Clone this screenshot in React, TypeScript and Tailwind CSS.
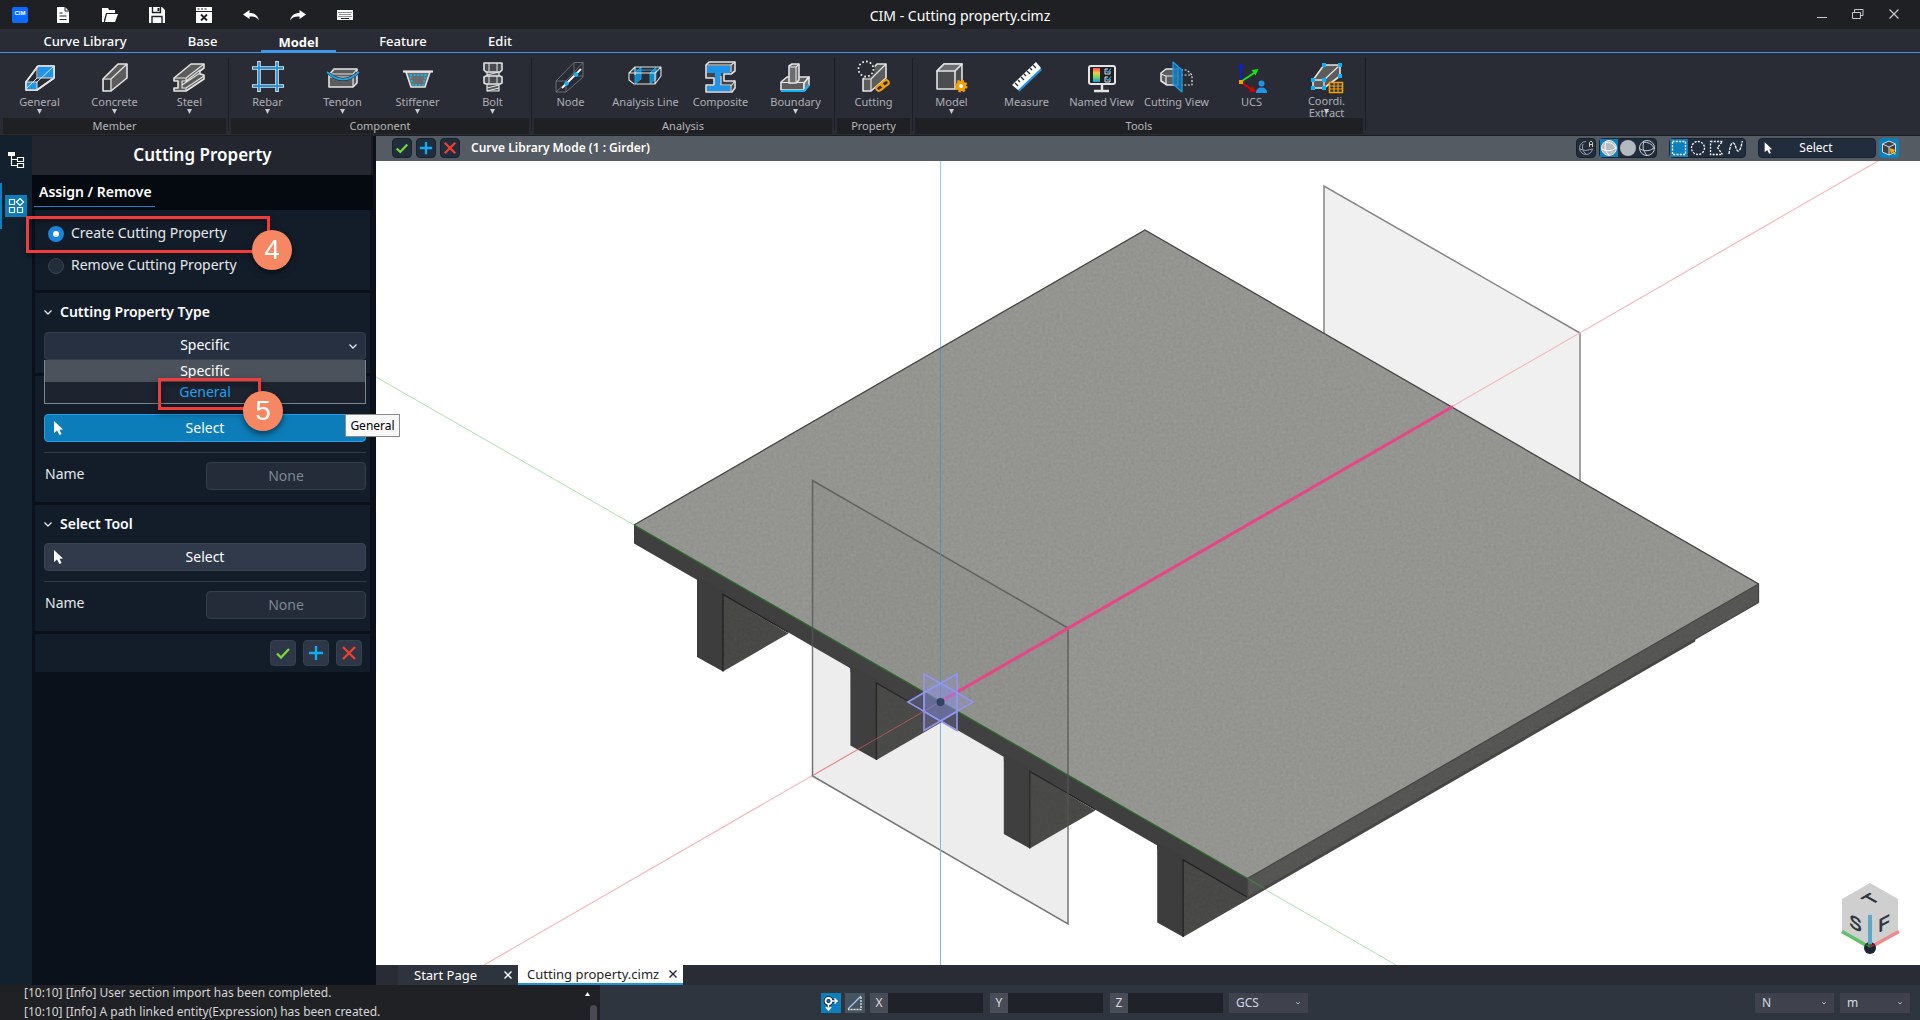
import { useState } from "react";
import type { ReactNode } from "react";

const EDGE = "#e4e4e4";
const BODY = "#5c5c5c";

type RibbonItem = { label: string; icon: ReactNode; menu?: boolean };
type RibbonGroup = { title: string; items: RibbonItem[] };

const ribbonGroups: RibbonGroup[] = [
  {
    title: "Member",
    items: [
      { label: "General", icon: <GeneralIcon />, menu: true },
      { label: "Concrete", icon: <ConcreteIcon />, menu: true },
      { label: "Steel", icon: <SteelIcon />, menu: true }
    ]
  },
  {
    title: "Component",
    items: [
      { label: "Rebar", icon: <RebarIcon />, menu: true },
      { label: "Tendon", icon: <TendonIcon />, menu: true },
      { label: "Stiffener", icon: <StiffenerIcon />, menu: true },
      { label: "Bolt", icon: <BoltIcon />, menu: true }
    ]
  },
  {
    title: "Analysis",
    items: [
      { label: "Node", icon: <NodeIcon /> },
      { label: "Analysis Line", icon: <AnalysisLineIcon /> },
      { label: "Composite", icon: <CompositeIcon /> },
      { label: "Boundary", icon: <BoundaryIcon />, menu: true }
    ]
  },
  {
    title: "Property",
    items: [{ label: "Cutting", icon: <CuttingIcon /> }]
  },
  {
    title: "Tools",
    items: [
      { label: "Model", icon: <ModelIcon />, menu: true },
      { label: "Measure", icon: <MeasureIcon /> },
      { label: "Named View", icon: <NamedViewIcon /> },
      { label: "Cutting View", icon: <CuttingViewIcon /> },
      { label: "UCS", icon: <UcsIcon /> },
      { label: "Coordi. Extract", icon: <CoordiIcon />, menu: true }
    ]
  }
];

const logLines = [
  "[10:10] [Info] User section import has been completed.",
  "[10:10] [Info] A path linked entity(Expression) has been created."
];

export default function App() {
  return (
    <div className="flex h-screen w-full flex-col overflow-hidden bg-[#0c131e] font-['Noto_Sans',sans-serif] text-[13px] text-white">
      <TitleBar />
      <MenuTabs />
      <Ribbon />
      <div className="flex min-h-0 flex-1">
        <SideRail />
        <PropertyPanel />
        <main className="flex min-w-0 flex-1 flex-col">
          <ViewHeader />
          <Viewport />
          <DocumentTabs />
        </main>
      </div>
      <StatusBar />
    </div>
  );
}

function TitleBar() {
  return (
    <header className="relative flex h-[29px] shrink-0 items-center bg-[#1f2024] pl-3">
      <svg className="mr-[27px] size-4" viewBox="0 0 16 16">
        <rect width="16" height="16" rx="2" fill="#0a6cff" />
        <text x="8" y="8" textAnchor="middle" fontSize="6" fontWeight="700" fill="#fff" fontFamily="Liberation Sans, sans-serif">
          CIM
        </text>
      </svg>
      <div className="flex items-center gap-[31px]">
        <QuickButton label="New">
          <path d="M2 0h8l4 4v12H2z" fill="#fff" />
          <path d="M10 0v4h4M4.500 6h3M4.500 9h7M4.500 12.500h7" stroke="#1f2024" fill="none" />
        </QuickButton>
        <QuickButton label="Open">
          <path d="M0 1h6l1 2h6v3H4L2 13v2H0z" fill="#fff" />
          <path d="M5 7h11l-3 8H3z" fill="#fff" />
        </QuickButton>
        <QuickButton label="Save">
          <path d="M0 0h13l3 3v13H0z" fill="#fff" />
          <path d="M3.500 0v5.500h8V0M3 16V9.500h10V16" stroke="#1f2024" strokeWidth="1.400" fill="none" />
          <path d="M8.500 1h2v3h-2z" fill="#1f2024" />
        </QuickButton>
        <QuickButton label="Close file">
          <path d="M0 0h16v4H0zM0 5h16v11H0z" fill="#fff" />
          <path d="M5 7.500l6 6M11 7.500l-6 6" stroke="#1f2024" strokeWidth="1.800" />
          <path d="M1.500 2h2M5 2h2M8.500 2h2" stroke="#1f2024" />
        </QuickButton>
        <QuickButton label="Undo">
          <path d="M0 7.500L6.500 3v3c5 0 8 2 9.500 7.500C13.500 10 11 9.300 6.500 9.500V12z" fill="#fff" />
        </QuickButton>
        <QuickButton label="Redo">
          <path d="M16 7.500L9.500 3v3C4.500 6 1.500 8 0 13.500 2.500 10 5 9.300 9.500 9.500V12z" fill="#fff" />
        </QuickButton>
        <QuickButton label="Keyboard">
          <path d="M0 3h16v10H0z" fill="#fff" />
          <path d="M1.500 5.500h13M2.500 7.500h12M1.500 9.500h13" stroke="#1f2024" strokeDasharray="1 1" />
          <path d="M4 11.500h8" stroke="#1f2024" />
        </QuickButton>
      </div>
      <h1 className="pointer-events-none absolute inset-x-0 top-[6px] text-center text-sm font-normal">CIM - Cutting property.cimz</h1>
      <div className="ml-auto flex items-center gap-5 pr-[18px] text-[#c8c9cc]">
        <button aria-label="Minimize" className="size-4">
          <svg viewBox="0 0 16 16"><path d="M3 10.500h10" stroke="currentColor" /></svg>
        </button>
        <button aria-label="Restore" className="size-4">
          <svg viewBox="0 0 16 16" fill="none" stroke="currentColor">
            <path d="M2.500 5.500h8v6h-8zM4.500 5V2.500h8.500v6H11" />
          </svg>
        </button>
        <button aria-label="Close" className="size-4">
          <svg viewBox="0 0 16 16"><path d="M3.500 2.500l9 9M12.500 2.500l-9 9" stroke="currentColor" strokeWidth="1.200" /></svg>
        </button>
      </div>
    </header>
  );
}

function QuickButton({ label, children }: { label: string; children: ReactNode }) {
  return (
    <button aria-label={label} className="size-4">
      <svg viewBox="0 0 16 16">{children}</svg>
    </button>
  );
}

function MenuTabs() {
  return (
    <nav className="flex h-6 shrink-0 border-b border-[#3d97ee] bg-[#292c35] pl-[26px] text-[13px] font-medium">
      <button className="w-[118px] pt-[2px]">Curve Library</button>
      <button className="w-[117px] pt-[2px]">Base</button>
      <button className="w-[75px] border-b-2 border-[#3d97ee] pt-1 font-bold">Model</button>
      <button className="w-[134px] pt-[2px]">Feature</button>
      <button className="w-[60px] pt-[2px]">Edit</button>
    </nav>
  );
}

function Ribbon() {
  return (
    <section className="flex h-[83px] shrink-0 border-b border-[#1b1d23] bg-[#292c35] pl-[2px]">
      {ribbonGroups.map((group) => (
        <div key={group.title} className="flex">
          <div>
            <div className="flex h-[65px]">
              {group.items.map((item) => (
                <button key={item.label} className="flex w-[75px] flex-col items-center pt-2">
                  <span className="size-8">{item.icon}</span>
                  <span
                    className={`mt-[2px] h-[14px] text-[11px] text-[#adafb4] ${
                      item.label.startsWith("Coordi") ? "w-10 leading-3" : "leading-[13px]"
                    }`}
                  >
                    {item.label}
                  </span>
                  {item.menu && (
                    <svg className="relative size-[5px]" viewBox="0 0 5 5">
                      <path d="M0 0h5L2.500 5z" fill="#c9cacd" />
                    </svg>
                  )}
                </button>
              ))}
            </div>
            <div className="mx-px h-4 bg-[#1f2024] text-center text-[11px] leading-4 text-[#b4b6bb]">{group.title}</div>
          </div>
          <div className="mx-px mt-[5px] mb-1 w-px bg-[#1c1e24]" />
        </div>
      ))}
    </section>
  );
}

function Icon({ children }: { children: ReactNode }) {
  return (
    <svg className="size-8 overflow-visible" viewBox="0 0 32 32" fill="none" stroke={EDGE} strokeWidth="1.600" strokeLinejoin="round">
      {children}
    </svg>
  );
}

function GeneralIcon() {
  return (
    <Icon>
      <path d="M14 5L2 21v8h11l17-12V5z" />
      <path d="M14 5h16v12H14z" fill="#1f94e8" stroke="none" />
      <path d="M2 21h11v8H2z" fill="#1f94e8" stroke="none" />
      <path d="M14 5h16v12M14 5L2 21v8h11l17-12" />
      <path d="M13 5v12M13 17h16M13 17L3 27M30 5L13 21M13 21v8M2 21h11" strokeWidth="1" />
    </Icon>
  );
}

function ConcreteIcon() {
  return (
    <Icon>
      <path d="M4 18L19 3h9v14L12 30H4z" fill={BODY} />
      <path d="M4 18h8v12M12 18L28 3" strokeWidth="1.200" />
      <path d="M5 19h6v10H5z" fill="#34363a" stroke="none" />
    </Icon>
  );
}

function SteelIcon() {
  return (
    <Icon>
      <path d="M0 17L17 3h13v4l-4 3v3l4 1v4L12 30H0v-3h4v-7H0z" fill={BODY} />
      <path d="M0 17h12v3H8v7h4v3M12 17L30 3M12 20L26 9M8 24L26 12M12 27l18-12" strokeWidth="1.100" />
    </Icon>
  );
}

function RebarIcon() {
  return (
    <Icon>
      <path d="M0 7h32M0 25h32M7 0v31M25 0v31" strokeWidth="3.600" />
      <path d="M1 7h30M1 25h30M7 1v29M25 1v29" stroke="#1f94e8" strokeWidth="1.800" />
    </Icon>
  );
}

function TendonIcon() {
  return (
    <Icon>
      <path d="M2 14l5-6h23v14l-4 4H2z" fill={BODY} />
      <path d="M2 15l3-2h21l4-5M26 16v10M2 16h24" strokeWidth="1.200" />
      <path d="M0 11q16 15 32 0" stroke="#1b1d23" strokeWidth="3" />
      <path d="M0 11q16 15 32 0" stroke="#22a7ea" strokeWidth="1.800" />
    </Icon>
  );
}

function StiffenerIcon() {
  return (
    <Icon>
      <path d="M4 11l5 15h14l5-15z" fill="#6b6b6b" />
      <path d="M1 10.500h30" strokeWidth="2.200" />
      <path d="M8 14h16l-3 10H11z" stroke="#14b4f5" strokeWidth="1.800" strokeDasharray="2 1.600" />
    </Icon>
  );
}

function BoltIcon() {
  return (
    <Icon>
      <path d="M10 10h12v20H10z" fill="#55575c" strokeWidth="1.200" />
      <path d="M7 2h18v7l-2 2H9L7 9z" fill="#494b50" />
      <path d="M7 16l2-1h14l2 1v6l-2 1H9l-2-1z" fill="#494b50" />
      <path d="M12 2v8M20 2v8M12 15v8M20 15v8M10 14l12-3M10 27l12-3M10 30l12-3" strokeWidth="1" />
    </Icon>
  );
}

function NodeIcon() {
  return (
    <Icon>
      <path d="M1 20L19 1.500h9V16L11 31H1zM1 20h10v11M11 20L28 1.500M1 31l18-16h9M19 15V2" stroke="#73757a" strokeWidth="0.900" />
      <path d="M7 27L26 8" stroke="#fff" strokeWidth="1.800" />
      <circle cx="11.500" cy="22.500" r="2.300" fill="#14b4f5" stroke="none" />
      <circle cx="21" cy="13.500" r="2.300" fill="#14b4f5" stroke="none" />
    </Icon>
  );
}

function AnalysisLineIcon() {
  return (
    <Icon>
      <path d="M5 12l6-6v12l-6 5zM20 12l6-6v12l-6 5z" fill="#1187cc" stroke="#22a7ea" strokeWidth="0.900" />
      <path d="M-1 12l6-6h26v9l-6 8H4l-5-4zM-1 12h26l6-6M25 12v11M5 6v8" strokeWidth="1.100" />
      <path d="M3 9h26" stroke="#22a7ea" strokeWidth="1" />
    </Icon>
  );
}

function CompositeIcon() {
  return (
    <Icon>
      <path d="M1 4l3-3h26v9l-4 3h-7v7h11v7l-3 4H1v-7h8v-7H1z" fill="#424449" />
      <path d="M2 5h23v5H2zM2 12h23l1-2H2z" fill="#1f94e8" stroke="none" />
      <path d="M10 11h6v15H10zM2 25h23v5H2z" fill="#1f94e8" stroke="none" />
      <path d="M2 4h24v7M26 4l4-3M16 15v9h10v6M26 25l4-5" strokeWidth="1.100" />
    </Icon>
  );
}

function BoundaryIcon() {
  return (
    <Icon>
      <path d="M1 21l6-5h22l-5 6v7H1z" fill={BODY} />
      <path d="M24 22l5-6v8l-5 6z" fill="#77797d" />
      <path d="M1 21.500h23" strokeWidth="1.100" />
      <path d="M9 5l3-2h7v16l-3 3H9z" fill="#6b6d71" />
      <path d="M9 6h7v15M16 6l3-3" strokeWidth="1.100" />
      <path d="M1 30h23l5-6" stroke="#12b0f5" strokeWidth="2" />
    </Icon>
  );
}

function CuttingIcon() {
  return (
    <Icon>
      <path d="M5 18L19 3h9v14L13 30H5z" fill={BODY} />
      <path d="M5 18h8v12M13 18L28 3" strokeWidth="1.200" />
      <circle cx="8" cy="8" r="9" fill="#292c35" stroke="none" />
      <circle cx="8" cy="8" r="7.500" strokeDasharray="1.800 2.100" strokeWidth="1.800" />
      <g stroke="#f5a000" strokeWidth="2">
        <rect x="18" y="24" width="8" height="5" rx="2.500" transform="rotate(-35 22 26.500)" fill="#292c35" />
        <rect x="23" y="20" width="8" height="5" rx="2.500" transform="rotate(-35 27 22.500)" />
      </g>
    </Icon>
  );
}

function ModelIcon() {
  return (
    <Icon>
      <path d="M1 10l7-7h18v17l-6 8H1z" fill="#4b4d51" />
      <path d="M1 10l7-7h18l-7 7z" fill="#6b6d71" />
      <path d="M19 10v18" />
      <circle cx="25" cy="25" r="5" fill="#f5a000" stroke="#f5a000" strokeDasharray="2.200 1.700" strokeWidth="3" />
      <circle cx="25" cy="25" r="5" fill="#f5a000" stroke="none" />
      <circle cx="25" cy="25" r="2" fill="#fff" stroke="none" />
    </Icon>
  );
}

function MeasureIcon() {
  return (
    <Icon>
      <path d="M8 31L31 9l-2-2L7 28z" fill="#1f94e8" stroke="none" />
      <path d="M1 24L25 1l5 6L7 29z" fill="#fff" stroke="none" />
      <path d="M4 22l3 3M7 19l2 2M10 16l3 3M13 13l2 2M16 10l3 3M19 7l2 2M22 4l3 3" stroke="#292c35" strokeWidth="1.300" />
    </Icon>
  );
}

function NamedViewIcon() {
  return (
    <Icon>
      <defs>
        <linearGradient id="contour" x2="0" y2="1">
          <stop offset="0" stopColor="#ff4f5e" />
          <stop offset=".35" stopColor="#ffc53d" />
          <stop offset=".6" stopColor="#7ee34c" />
          <stop offset="1" stopColor="#1f94e8" />
        </linearGradient>
      </defs>
      <rect x="3" y="5" width="26" height="18" rx="2" strokeWidth="2" fill="#1f2024" />
      <path d="M7 7h7v14H7z" fill="url(#contour)" stroke="none" />
      <path d="M16 24v5M8 30h15" strokeWidth="2.400" />
      <path d="M24 10v3h-5V8h3M24 18v3h-5v-5h3" strokeWidth="1" />
      <path d="M20 9.500l2 2 3-4M20 17.500l2 2 3-4" stroke="#22a7ea" strokeWidth="1.200" />
    </Icon>
  );
}

function CuttingViewIcon() {
  return (
    <Icon>
      <path d="M20 9h6l5 5v10H20M20 14h11" strokeWidth="1.200" strokeDasharray="2 1.600" />
      <path d="M0 12l5-4h12v16H6l-6-4z" fill={BODY} />
      <path d="M0 13l5 2v8M5 15h12" strokeWidth="1.200" />
      <path d="M12 1l9 8v22l-9-8z" fill="#1477b8" fillOpacity=".85" stroke="#1fa0e8" strokeWidth="1.200" />
    </Icon>
  );
}

function UcsIcon() {
  return (
    <Icon>
      <path d="M5 19V6" stroke="#0a1ee6" strokeWidth="1.800" />
      <path d="M2.500 7L5 1.500 7.500 7z" fill="#0a1ee6" stroke="none" />
      <path d="M6 20l12-8" stroke="#14e614" strokeWidth="2" />
      <path d="M22.500 8l-3 6.500-4-5.500z" fill="#14e614" stroke="none" />
      <path d="M6 22l9 6" stroke="#e00000" strokeWidth="2" />
      <path d="M20 31l-7-.5 3.500-5.500z" fill="#e00000" stroke="none" />
      <path d="M3 19h4v4H3z" fill="#f5a000" stroke="none" />
      <circle cx="25.500" cy="22.500" r="3" fill="#1f94e8" stroke="none" />
      <path d="M20 32q0-5.500 5.500-5.500T31 32z" fill="#1f94e8" stroke="none" />
    </Icon>
  );
}

function CoordiIcon() {
  return (
    <Icon>
      <path d="M2 19L13 4h16v11L13 27H2z" fill={BODY} />
      <path d="M2 19h11v8M13 19L29 4" strokeWidth="1.300" />
      <path d="M11 2h4v4h-4zM27 2h4v4h-4zM27 13h4v4h-4zM0 17h4v4H0zM11 17h4v4h-4zM0 25h4v4H0zM11 25h4v4h-4z" fill="#0fb0f5" stroke="none" />
      <path d="M18.500 21.500h13v10h-13z" fill="#292c35" stroke="#f5a000" />
      <path d="M18.500 25h13M18.500 28h13M23 21.500v10M27 21.500v10" stroke="#f5a000" strokeWidth="1.200" />
    </Icon>
  );
}

function SideRail() {
  return (
    <aside className="flex w-8 shrink-0 flex-col items-center bg-[#13202e]">
      <button aria-label="Works tree" className="mt-3 h-[22px] w-full">
        <svg className="mx-auto size-[22px]" viewBox="0 0 22 22" fill="none" stroke="#fff" strokeWidth="1.200">
          <path d="M3 4h7v4H3z" fill="#fff" stroke="none" />
          <path d="M6.500 8v9.500H12M6.500 11.500H12M12.500 9.500h6v4h-6zM12.500 15.500h6v4h-6z" />
        </svg>
      </button>
      <button aria-label="Task panel" className="mt-[13px] flex h-[46px] w-full items-center border-l-2 border-[#0f7fbd] pl-[3px]">
        <svg className="size-[22px] bg-[#0d7cb8]" viewBox="0 0 22 22" fill="none" stroke="#fff" strokeWidth="1.200">
          <path d="M4.500 4.500h5v5h-5zM4.500 12.500h5v5h-5zM12.500 12.500h5v5h-5zM15 3.500L18.500 7 15 10.500 11.500 7z" />
        </svg>
      </button>
    </aside>
  );
}

function PropertyPanel() {
  const [mode, setMode] = useState("create");

  return (
    <aside className="relative z-10 w-[344px] shrink-0 bg-[#0a111b] pr-[3px]">
      <h2 className="h-[39px] border-r-2 border-[#181b22] bg-[#23262f] pl-[2px] text-center text-[17px] leading-[38px] font-semibold">
        Cutting Property
      </h2>
      <div className="flex h-[35px] bg-[#050a11] pl-[2px]">
        <button className="h-8 w-[121px] border-b border-[#1c7fd6] pt-[2px] pl-[5px] text-left text-sm font-semibold">
          Assign / Remove
        </button>
      </div>

      <div className="relative space-y-[3px] pr-[3px] pl-[3px]">
        <div className="h-20 bg-[#131d2a] pt-[14px] pl-[13px]">
          <ModeRadio label="Create Cutting Property" checked={mode === "create"} onChange={() => setMode("create")} />
          <ModeRadio label="Remove Cutting Property" checked={mode === "remove"} onChange={() => setMode("remove")} />
        </div>

        <section className="h-20 bg-[#131d2a] px-[9px]">
          <SectionTitle>Cutting Property Type</SectionTitle>
          <TypeSelect />
        </section>

        <section className="bg-[#131d2a] pt-[38px] pr-1 pb-3 pl-[9px]">
          <PickRow id="target-name" active />
        </section>

        <section className="bg-[#131d2a] pr-1 pb-3 pl-[9px]">
          <SectionTitle>Select Tool</SectionTitle>
          <PickRow id="tool-name" />
        </section>

        <div className="flex h-[38px] items-center justify-end gap-[7px] bg-[#131d2a] pr-2">
          <ActionButton kind="ok" />
          <ActionButton kind="apply" />
          <ActionButton kind="cancel" />
        </div>
      </div>

      <Callout step="4" className="top-20 -left-[6px] h-[37px] w-[244px]" badgeClassName="-bottom-5" />
      <Callout step="5" className="top-[242px] left-[126px] h-8 w-[103px]" badgeClassName="-bottom-6" />
      <div
        role="tooltip"
        className="absolute top-[278px] left-[313px] h-[23px] w-[55px] border border-[#8a8a8a] bg-[#f7f7f7] text-center text-[12px] leading-[22px] text-black"
      >
        General
      </div>
    </aside>
  );
}

function ModeRadio({ label, checked, onChange }: { label: string; checked: boolean; onChange: () => void }) {
  return (
    <label className="mb-3 flex h-5 items-center gap-[7px] text-sm text-[#e6e8ea]">
      <input
        type="radio"
        name="mode"
        checked={checked}
        onChange={onChange}
        className="size-4 appearance-none rounded-full border border-[#3a4453] bg-[#242d3a] checked:border-5 checked:border-[#1c86dc] checked:bg-white"
      />
      <span className="pb-[2px]">{label}</span>
    </label>
  );
}

function SectionTitle({ children }: { children: ReactNode }) {
  return (
    <h3 className="flex h-[38px] items-center gap-2 text-sm font-semibold">
      <Chevron />
      {children}
    </h3>
  );
}

function Chevron() {
  return (
    <svg className="size-2 shrink-0" viewBox="0 0 8 8" fill="none" stroke="#e6e8ea" strokeWidth="1.300">
      <path d="M0.500 2.500L4 6l3.500-3.500" />
    </svg>
  );
}

function TypeSelect() {
  return (
    <div className="relative mt-px -mr-1 w-[322px]">
      <select
        aria-label="Cutting Property Type"
        defaultValue="Specific"
        className="h-7 w-full appearance-none rounded-sm border border-[#353e4d] bg-[#273041] pb-[2px] text-center text-sm [text-align-last:center]"
      >
        <option>Specific</option>
        <option>General</option>
      </select>
      <span className="pointer-events-none absolute top-[10px] right-[9px]">
        <Chevron />
      </span>
      <ul role="listbox" className="absolute top-7 left-0 z-10 h-11 w-full border border-t-0 border-[#7c848e] bg-[#1d2430] text-center text-sm">
        <li role="option" aria-selected className="h-[22px] bg-[#4c525c] leading-[22px]">Specific</li>
        <li role="option" aria-selected={false} className="h-[21px] leading-5 text-[#1fa0f0]">General</li>
      </ul>
    </div>
  );
}

function PickRow({ id, active = false }: { id: string; active?: boolean }) {
  return (
    <div>
      <button
        className={`relative flex h-7 w-full items-center justify-center rounded-sm border pb-px text-sm ${
          active ? "border-[#2b9ce8] bg-[#0c7db8]" : "border-[#3a4453] bg-[#303a4a]"
        }`}
      >
        <span className="absolute top-[5px] left-[7px]">
          <Cursor />
        </span>
        Select
      </button>
      <div className="mt-[10px] h-px bg-[#2f3a47]" />
      <div className="mt-[9px] flex h-7 items-center justify-between pl-px">
        <label htmlFor={id} className="mb-1 text-sm text-[#e6e8ea]">Name</label>
        <input
          id={id}
          readOnly
          placeholder="None"
          className="h-7 w-40 rounded-sm border border-[#333c49] bg-[#242c39] pb-[2px] text-center text-sm placeholder:text-[#7e8690]"
        />
      </div>
    </div>
  );
}

function Cursor() {
  return (
    <svg className="h-4 w-3" viewBox="0 0 12 16">
      <path d="M2 1v12l3-2.500L7.500 15 9.500 14 7.500 9.800 11 9.500z" fill="#fff" />
    </svg>
  );
}

function ActionMark({ kind }: { kind: "ok" | "apply" | "cancel" }) {
  if (kind === "ok") {
    return <path d="M2 8.500l4 4 8-8.500" stroke="#76d83a" />;
  }
  if (kind === "apply") {
    return <path d="M8 1v14M1 8h14" stroke="#12acf5" />;
  }
  return <path d="M2 2l12 12M14 2L2 14" stroke="#f0402a" />;
}

function ActionButton({ kind }: { kind: "ok" | "apply" | "cancel" }) {
  return (
    <button aria-label={kind} className="flex size-[26px] items-center justify-center rounded-sm border border-[#364050] bg-[#2d3747]">
      <svg className="size-4" viewBox="0 0 16 16" fill="none" strokeWidth="2.400">
        <ActionMark kind={kind} />
      </svg>
    </button>
  );
}

function Callout({ step, className, badgeClassName }: { step: string; className: string; badgeClassName: string }) {
  return (
    <div className={`pointer-events-none absolute z-20 border-3 border-[#f23c3c] drop-shadow-[0_3px_3px_rgba(0,0,0,0.5)] ${className}`}>
      <span
        className={`absolute -right-[25px] flex size-10 items-center justify-center rounded-full bg-[#f68763] font-['Liberation_Sans',sans-serif] text-[28px] leading-none ${badgeClassName}`}
      >
        {step}
      </span>
    </div>
  );
}

function ViewHeader() {
  return (
    <div className="flex h-[25px] shrink-0 items-center bg-[#555b63] pr-[21px] pb-px pl-4">
      <div className="flex gap-1">
        {(["ok", "apply", "cancel"] as const).map((kind) => (
          <button key={kind} aria-label={`${kind} mode`} className="flex size-5 items-center justify-center rounded-sm border border-[#18212f] bg-[#212c3d]">
            <svg className="size-[14px]" viewBox="0 0 16 16" fill="none" strokeWidth="2.600">
              <ActionMark kind={kind} />
            </svg>
          </button>
        ))}
      </div>
      <span className="ml-[11px] text-[12px] font-semibold">Curve Library Mode (1 : Girder)</span>

      <div className="ml-auto flex items-center">
        <ToolGroup>
          <ToolButton label="Auto shading">
            <path d="M9 2.500A6.500 6.500 0 1 0 15.500 10M6 5q-2 6 3 10M2.500 10q6 3 13 0" stroke="#9a9ea5" />
            <path d="M12.500 8V3.500L14 2l1.500 1.500V8M12.500 5.500h3" stroke="#d8c9a0" />
          </ToolButton>
        </ToolGroup>
        <div className="w-[3px]" />
        <ToolGroup>
          <ToolButton label="Shaded with edges" active>
            <circle cx="9" cy="9" r="7.500" fill="#b9bcc2" stroke="#e8e8e8" />
            <path d="M6 2.500q-3 7 3 14M2 10q7 4 14-1M5 3q8 0 11 6" stroke="#fff" />
          </ToolButton>
          <ToolButton label="Shaded">
            <circle cx="9" cy="9" r="8" fill="#b5b8bf" stroke="none" />
          </ToolButton>
          <ToolButton label="Wireframe">
            <circle cx="9" cy="9" r="7.500" stroke="#c8cad0" />
            <path d="M6 2.500q-3 7 3 14M2 10q7 4 14-1M5 3q8 0 11 6" stroke="#c8cad0" />
          </ToolButton>
        </ToolGroup>
        <div className="w-3" />
        <ToolGroup>
          <ToolButton label="Box selection" active>
            <path d="M2.500 2.500h13v13h-13z" stroke="#fff" strokeDasharray="2 1.300" strokeWidth="1.300" />
          </ToolButton>
          <ToolButton label="Circle selection">
            <circle cx="9" cy="9" r="6.500" stroke="#fff" strokeDasharray="2 1.300" strokeWidth="1.300" />
          </ToolButton>
          <ToolButton label="Polygon selection">
            <path d="M2.500 2.500h12l-5 6 5 7h-12z" stroke="#fff" strokeDasharray="2 1.300" strokeWidth="1.300" />
          </ToolButton>
          <ToolButton label="Polyline selection">
            <path d="M2 15C3 8 4 3 6.500 4S9 13 11.500 12 14 6 15.500 2" stroke="#fff" strokeDasharray="3 1" strokeWidth="1.300" />
          </ToolButton>
        </ToolGroup>
        <button className="relative ml-3 h-5 w-[118px] rounded-sm border border-[#18212f] bg-[#212c3d] pr-[2px] text-center text-[12px] leading-4">
          <svg className="absolute top-[2px] left-1 h-[14px] w-[10px]" viewBox="0 0 12 16">
            <path d="M2 1v12l3-2.500L7.500 15 9.500 14 7.500 9.800 11 9.500z" fill="#fff" />
          </svg>
          Select
        </button>
        <button aria-label="Pick solid" className="ml-[3px] size-5 rounded-sm bg-[#0d7fbc]">
          <svg viewBox="0 0 20 20" fill="#3e4248" stroke="#dcdde0" strokeLinejoin="round">
            <path d="M10 3l6.500 3v8L10 17l-6.500-3V6z" />
            <path d="M3.500 6L10 9l6.500-3M10 9v8" />
            <path d="M10.500 10l6.500 2-2.500 1 2.500 3-1.500 1-2-3-1.500 2z" fill="#f5b000" stroke="none" />
          </svg>
        </button>
      </div>
    </div>
  );
}

function ToolGroup({ children }: { children: ReactNode }) {
  return <div className="flex h-5 items-center gap-px rounded-sm border border-[#18212f] bg-[#212c3d]">{children}</div>;
}

function ToolButton({ label, active = false, children }: { label: string; active?: boolean; children: ReactNode }) {
  return (
    <button aria-label={label} className={`size-[18px] ${active ? "bg-[#0d7fbc]" : ""}`}>
      <svg viewBox="0 0 18 18" fill="none">{children}</svg>
    </button>
  );
}

// Girder section polygons repeat along the front edge of the deck.
const girders = [0, 1, 2, 3].map((i) => ({ x: 697 + i * 153.4, y: 579.5 + i * 88.5 }));

function Viewport() {
  return (
    <div className="min-h-0 flex-1 bg-white">
      <svg className="h-full w-full" viewBox="376 161 1544 804" preserveAspectRatio="xMidYMid slice">
        <defs>
          <filter id="concrete" x="0" y="0" width="100%" height="100%">
            <feTurbulence type="fractalNoise" baseFrequency="0.35" numOctaves="3" seed="4" result="noise" />
            <feColorMatrix in="noise" type="matrix" values="0 0 0 0 0  0 0 0 0 0  0 0 0 0 0  0.22 0 0 0 -0.06" result="grain" />
            <feComposite in="grain" in2="SourceGraphic" operator="in" result="clipped" />
            <feMerge>
              <feMergeNode in="SourceGraphic" />
              <feMergeNode in="clipped" />
            </feMerge>
          </filter>
        </defs>

        {/* rear cutting plane */}
        <path d="M1324 186L1580 333V481L1452 407L1324 333z" fill="#f0f0f0" />
        <path d="M1324 333V186L1580 333V481" fill="none" stroke="#858585" strokeWidth="1.500" />

        <path d="M812.500 480.500L1068 628V924L812.500 776z" fill="#f8f8f8" />

        <path d="M376 377L634 525M1247 879L1396 965" stroke="#a9e3a9" strokeWidth="1" />
        <path d="M484 965L940 702M1453 406L1878 161" stroke="#f6b9b9" strokeWidth="1.200" />
        <path d="M940.500 161V965" stroke="#8fd0ea" strokeWidth="1" />

        {girders.map(({ x, y }, i) => (
          <g key={i}>
            <path
              d={i < 3 ? `M${x + 26} ${y + 15}l65.500 39l-65.500 38z` : `M${x + 26} ${y + 15}l64 37l448 -259v3.500l-512 295.500z`}
              fill="#4c4c4a"
              filter="url(#concrete)"
            />
            <path d={`M${x} ${y - 2}V${y + 77.500}l26 14.500V${y + 14}z`} fill="#3d3d3d" />
          </g>
        ))}
        <path d="M634 525L1247.500 878.500V897.500L634 543.500z" fill="#3f3f3f" />
        {girders.map(({ x, y }, i) => (
          <path key={i} d={`M${x} ${y - 3}l28 16V${y + 16}L${x} ${y + 4}z`} fill="#3d3d3d" />
        ))}
        {girders.map(({ x, y }, i) => (
          <path key={i} d={`M${x + 26} ${y + 92}V${y + 15}l65.500 38`} fill="none" stroke="#222" strokeWidth="1.300" />
        ))}
        <path d="M1247.500 878.500L1758.500 584V602.500L1247.500 897.500z" fill="#585856" filter="url(#concrete)" />
        <path d="M1145 230L1758.500 584L1247.500 878.500L634 525z" fill="#989894" filter="url(#concrete)" />
        <path d="M634 525L1145 230L1758.500 584V602.500M1758.500 584L1247.500 878.500V897.500L1758.500 602.500" fill="none" stroke="#454545" strokeWidth="1.300" />
        <path d="M634 525L1247.500 878.500" stroke="#246b24" strokeWidth="1.300" />
        <path d="M1247.500 878.500l17 10" stroke="#3a8a3a" strokeWidth="1" />

        {/* front cutting plane, seen over the deck */}
        <path d="M812.500 480.500L1068 628V924L812.500 776z" fill="#606860" fillOpacity="0.070" stroke="#555" strokeOpacity=".8" strokeWidth="1.500" />
        <path d="M940.500 348V702" stroke="#3f96b5" strokeOpacity=".85" strokeWidth="1" />
        <path d="M940.500 724V965" stroke="#74bfdc" strokeWidth="1" />
        <path d="M812 776L940 702" stroke="#d66" strokeOpacity=".6" strokeWidth="1" />
        <path d="M940 702L1453 406.500" stroke="#ea4488" strokeWidth="3" />

        {/* origin planes */}
        <g fill="#8f92e8" fillOpacity=".22" stroke="#9295ec" strokeWidth="1.600">
          <path d="M924 674l33 18.500v38l-33-19z" />
          <path d="M957 674l-33 18.500v38l33-19z" />
          <path d="M908 702l32.500-19L973 702l-32.500 19z" />
        </g>
        <circle cx="940.500" cy="702" r="4" fill="#2f4460" />

        <NavCube />
      </svg>
    </div>
  );
}

function NavCube() {
  return (
    <g>
      <path d="M1870 883l28 16v33l-28 16-28-16V899z" fill="#cfcfcf" />
      <g fill="#2b303b" stroke="#2b303b" strokeWidth=".8" fontFamily="Liberation Sans, sans-serif" fontSize="18" textAnchor="middle">
        <text transform="translate(1855.500 929.500) skewY(28)">S</text>
        <text transform="translate(1884 929.500) skewY(-28)">F</text>
        <text transform="matrix(0.870 -0.500 0.870 0.500 1876 902)">T</text>
      </g>
      <path d="M1842 931.500l28 16" stroke="#5fc26b" strokeWidth="3.500" />
      <path d="M1870 947.500l29-16" stroke="#ee8a8e" strokeWidth="3.500" />
      <circle cx="1870" cy="948" r="6" fill="#1d2335" />
      <path d="M1870 915v32" stroke="#5aa9cc" strokeWidth="4" />
      <path d="M1865 945l5 3v-4z" fill="#178a2c" />
      <path d="M1875 945l-5 3v-4z" fill="#a8263a" />
    </g>
  );
}

function CloseMark() {
  return (
    <svg className="size-2" viewBox="0 0 8 8" stroke="currentColor" strokeWidth="1.400">
      <path d="M0.500 0.500l7 7M7.500 0.500l-7 7" />
    </svg>
  );
}

function DocumentTabs() {
  return (
    <div className="flex h-5 shrink-0 bg-[#292c35] pl-[22px] text-[13px] leading-5">
      <div className="flex w-[120px] items-center justify-between bg-[#2d343e] pr-[6px] pl-4">
        <button>Start Page</button>
        <button aria-label="Close Start Page"><CloseMark /></button>
      </div>
      <div className="flex w-[165px] items-center justify-between border-b-2 border-[#1f94e0] bg-white pr-[6px] pl-[9px] text-[#22252c]">
        <button>Cutting property.cimz</button>
        <button aria-label="Close Cutting property.cimz"><CloseMark /></button>
      </div>
    </div>
  );
}

function StatusBar() {
  return (
    <footer className="flex h-[35px] shrink-0 bg-[#2f353f]">
      <div className="flex w-[600px] bg-[#202124] pl-6 text-[12px] leading-[15px] text-[#d3d5d8]">
        <div className="flex-1 space-y-1">
          {logLines.map((line) => (
            <p key={line}>{line}</p>
          ))}
        </div>
        <div className="flex w-[17px] flex-col items-center">
          <svg className="mt-[7px] mr-2 h-1 w-[5px]" viewBox="0 0 5 4"><path d="M0 4h5L2.500 0z" fill="#fff" /></svg>
          <div className="mt-auto ml-[3px] h-[15px] w-[7px] rounded-t-sm bg-[#4a4b52]" />
        </div>
      </div>

      <div className="flex flex-1 items-start pt-2 pr-[10px] pl-[221px]">
        <button aria-label="Relative input" className="size-5 bg-[#0d7fbc]">
          <svg viewBox="0 0 20 20" fill="none" stroke="#111c28" strokeWidth="3.600">
            <circle cx="7.500" cy="8" r="3" />
            <path d="M7.500 11v5M11 8h5" />
            <path d="M5 14l2.500 3 2.500-3M13.500 5.500L16 8l-2.500 2.500M7.500 11v5M11 8h5" stroke="#fff" strokeWidth="1.600" />
            <circle cx="7.500" cy="8" r="3" stroke="#fff" strokeWidth="1.800" />
          </svg>
        </button>
        <button aria-label="Angle input" className="ml-1 size-5 bg-[#46545f]">
          <svg viewBox="0 0 20 20" fill="none" strokeWidth="1.300">
            <path d="M3 16L16 3" stroke="#a9c9f0" />
            <path d="M16 4v12.500H3" stroke="#e8e8e8" strokeDasharray="2 1" />
          </svg>
        </button>
        <div className="ml-[5px] flex gap-[7px]">
          {["X", "Y", "Z"].map((axis) => (
            <label key={axis} className="flex h-5 bg-[#484c57]">
              <span className="w-[18px] text-center text-[12px] leading-5 text-[#dcdde0]">{axis}</span>
              <input className="h-5 w-[95px] bg-[#1f2229] px-1 text-[12px]" />
            </label>
          ))}
        </div>
        <StatusSelect label="Coordinate system" value="GCS" className="ml-[6px] w-[79px]" />
        <StatusSelect label="Force unit" value="N" className="ml-auto w-[79px]" />
        <StatusSelect label="Length unit" value="m" className="ml-[6px] w-[70px]" />
      </div>
    </footer>
  );
}

function StatusSelect({ label, value, className }: { label: string; value: string; className: string }) {
  return (
    <div className={`relative h-5 bg-[#3f424d] ${className}`}>
      <select aria-label={label} className="h-5 w-full appearance-none px-[7px] text-[12px] text-[#cfdbe4]">
        <option>{value}</option>
      </select>
      <svg className="pointer-events-none absolute top-2 right-2 size-1" viewBox="0 0 8 8" fill="none" stroke="#b9bcc2" strokeWidth="2">
        <path d="M0.500 2.500L4 6l3.500-3.500" />
      </svg>
    </div>
  );
}
